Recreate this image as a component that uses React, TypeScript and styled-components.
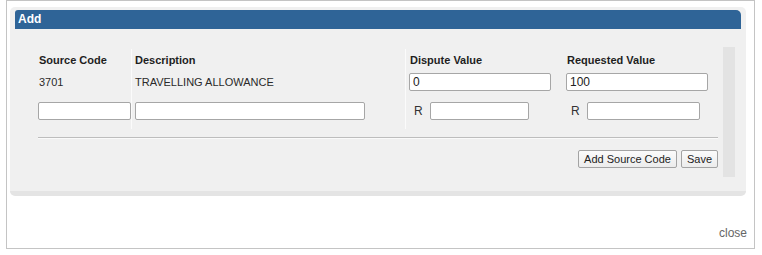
import styled, { createGlobalStyle } from 'styled-components';

const GlobalStyle = createGlobalStyle`
  html, body {
    margin: 0;
    padding: 0;
    background: #fff;
  }
  body {
    font-family: 'Liberation Sans', Arial, sans-serif;
    font-size: 11px;
    color: #222;
  }
`;

const Dialog = styled.div`
  box-sizing: border-box;
  width: 749px;
  height: 249px;
  margin-left: 6px;
  border: 1px solid #c4c4c4;
  padding: 6px 7px 0 3px;
  display: flex;
  flex-direction: column;
`;

const Panel = styled.div`
  box-sizing: border-box;
  width: 736px;
  height: 189px;
  background: #f0f0f0;
  border-radius: 5px;
  border-bottom: 5px solid #e4e4e4;
  padding: 3px 5px 0;
`;

const Header = styled.div`
  height: 19px;
  line-height: 19px;
  background: #2f6497;
  border-radius: 3px 5px 0 0;
  color: #fff;
  font-weight: bold;
  font-size: 12px;
  padding-left: 3px;
`;

const Body = styled.div`
  display: flex;
  padding-top: 18px;
`;

const Content = styled.div`
  flex: 1;
  padding: 2px 3px 0 20px;
`;

const Scrollbar = styled.div`
  width: 12px;
  height: 130px;
  background: #e3e3e3;
  margin-right: 6px;
`;

const Table = styled.div`
  display: grid;
  grid-template-columns: 97px 274px 157px 157px;
  grid-template-rows: 22px 22px 36px;
`;

const Cell = styled.div<{ $divider?: boolean; $pad?: number }>`
  display: flex;
  align-items: center;
  padding-left: ${(p) => p.$pad ?? 3}px;
  border-left: ${(p) => (p.$divider ? '1px solid #fbfbfb' : 'none')};
  margin-left: ${(p) => (p.$divider ? '-1px' : '0')};
  color: #2a2a2a;
`;

const HeadCell = styled(Cell)`
  font-weight: bold;
  color: #1e1e1e;
`;

const Label = styled.span`
  margin: 0 7px 0 5px;
  font-size: 12px;
  color: #333;
`;

const Input = styled.input<{ $w: number }>`
  box-sizing: border-box;
  width: ${(p) => p.$w}px;
  height: 18px;
  border: 1px solid #a6a6a6;
  border-radius: 2px;
  background: #fff;
  padding: 0 3px;
  font-family: 'Liberation Sans', Arial, sans-serif;
  font-size: 12px;
  color: #222;
  outline: none;
`;

const Rule = styled.div`
  margin: 8px 2px 0 3px;
  border-top: 1px solid #bdbdbd;
  border-bottom: 1px solid #fafafa;
`;

const Actions = styled.div`
  display: flex;
  justify-content: flex-end;
  gap: 4px;
  margin: 11px 2px 0 0;
`;

const Button = styled.button`
  box-sizing: border-box;
  height: 18px;
  padding: 0 5px;
  border: 1px solid #a3a3a3;
  border-radius: 2px;
  background: linear-gradient(#fbfbfb, #ececec);
  font-family: 'Liberation Sans', Arial, sans-serif;
  font-size: 11px;
  color: #222;
  line-height: 16px;
`;

const Footer = styled.div`
  margin-top: auto;
  text-align: right;
  padding: 0 0 8px;
  font-size: 12px;
  color: #666;
`;

export default function App() {
  return (
    <>
      <GlobalStyle />
      <Dialog>
        <Panel>
          <Header>Add</Header>
          <Body>
            <Content>
              <Table>
                <HeadCell $pad={4}>Source Code</HeadCell>
                <HeadCell $divider>Description</HeadCell>
                <HeadCell $divider $pad={4}>Dispute Value</HeadCell>
                <HeadCell $pad={4}>Requested Value</HeadCell>

                <Cell $pad={4}>3701</Cell>
                <Cell $divider>TRAVELLING ALLOWANCE</Cell>
                <Cell $divider>
                  <Input $w={142} defaultValue="0" />
                </Cell>
                <Cell>
                  <Input $w={142} defaultValue="100" />
                </Cell>

                <Cell>
                  <Input $w={93} />
                </Cell>
                <Cell $divider>
                  <Input $w={230} />
                </Cell>
                <Cell $divider>
                  <Label>R</Label>
                  <Input $w={99} />
                </Cell>
                <Cell>
                  <Label>R</Label>
                  <Input $w={113} />
                </Cell>
              </Table>
              <Rule />
              <Actions>
                <Button>Add Source Code</Button>
                <Button>Save</Button>
              </Actions>
            </Content>
            <Scrollbar />
          </Body>
        </Panel>
        <Footer>close</Footer>
      </Dialog>
    </>
  );
}
